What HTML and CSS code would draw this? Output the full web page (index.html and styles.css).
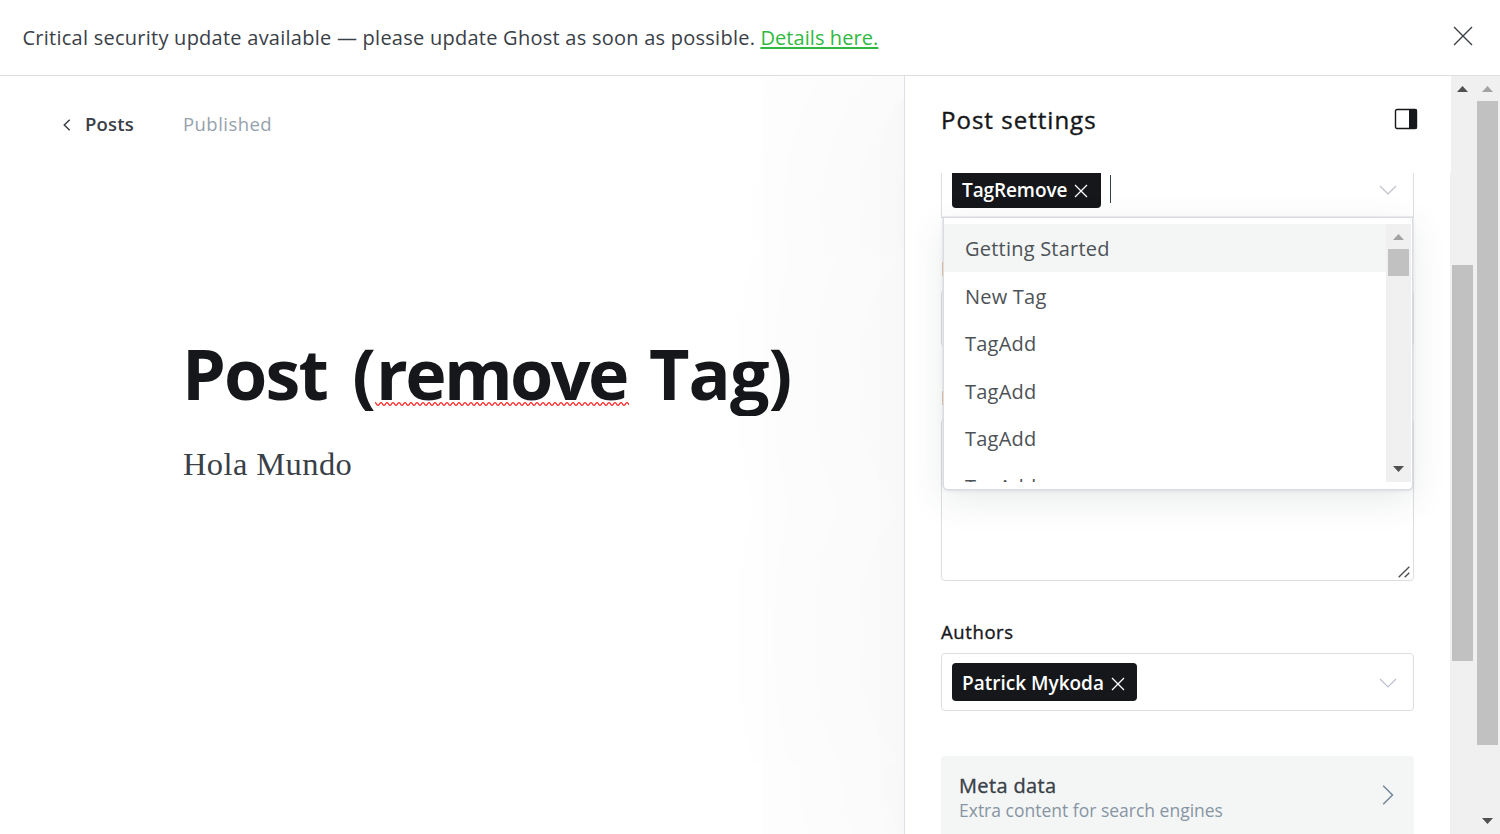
FILE: index.html
```html
<!DOCTYPE html>
<html lang="en">
<head>
<meta charset="utf-8">
<title>Post settings</title>
<link rel="stylesheet" href="styles.css">
</head>
<body>
<div class="app">
  <header class="banner">
    <p class="banner-text"><span class="banner-copy">Critical security update available — please update Ghost as soon as possible.</span> <a class="banner-link" href="#">Details here.</a></p>
    <svg class="banner-close" viewBox="0 0 20 20"><path d="M1 1L19 19M19 1L1 19"/></svg>
  </header>
  <div class="workspace">
    <main class="editor">
      <nav class="crumbs">
        <svg class="back" viewBox="0 0 8 12"><path d="M6.7 .8L1.3 6L6.7 11.2"/></svg>
        <span class="posts">Posts</span>
        <span class="status">Published</span>
      </nav>
      <h1 class="title">Post (<span class="misspelt">remove<svg class="wave" viewBox="0 0 254 4"><defs><pattern id="squiggle" width="6" height="4" patternUnits="userSpaceOnUse"><path class="wave-line" d="M-1.5 2Q0 -.6 1.5 2T4.5 2T7.5 2"/></pattern></defs><rect width="254" height="4" fill="url(#squiggle)"/></svg></span> <span class="title-end">Tag)</span></h1>
      <p class="body-copy">Hola Mundo</p>
    </main>
    <aside class="panel">
      <div class="panel-head">
        <h2 class="panel-title">Post settings</h2>
        <svg class="panel-icon" viewBox="0 0 24 22"><rect x="1.5" y="1.5" width="21" height="19" rx="1.5"/><path d="M15 1h7.5v20H15z"/></svg>
      </div>
      <div class="panel-scroll">
        <div class="select tags">
          <span class="chip chip-tag"><span class="chip-tag-text">TagRemove</span><svg class="chip-x" viewBox="0 0 14 14"><path d="M1 1L13 13M13 1L1 13"/></svg></span>
          <span class="caret"></span>
          <svg class="chevron" viewBox="0 0 18 10"><path d="M1 1L9 9L17 1"/></svg>
          <div class="dropdown">
            <ul class="options">
              <li class="option active">Getting Started</li>
              <li class="option">New Tag</li>
              <li class="option">TagAdd</li>
              <li class="option">TagAdd</li>
              <li class="option">TagAdd</li>
              <li class="option">TagAdd</li>
            </ul>
            <div class="bar list-bar">
              <svg class="arrow faint" viewBox="0 0 11 6"><path d="M0 6L5.5 0L11 6z"/></svg>
              <div class="thumb list-thumb"></div>
              <svg class="arrow low" viewBox="0 0 11 6"><path d="M0 0L5.5 6L11 0z"/></svg>
            </div>
          </div>
        </div>
        <div class="covered-label first"></div>
        <div class="field"></div>
        <div class="covered-label second"></div>
        <div class="textarea"><svg class="grip" viewBox="0 0 12 12"><path d="M.7 11.3L11.3 .7M6.7 11.3L11.3 6.7"/></svg></div>
        <h3 class="label">Authors</h3>
        <div class="select authors">
          <span class="chip"><span class="chip-author-text">Patrick Mykoda</span><svg class="chip-x" viewBox="0 0 14 14"><path d="M1 1L13 13M13 1L1 13"/></svg></span>
          <svg class="chevron" viewBox="0 0 18 10"><path d="M1 1L9 9L17 1"/></svg>
        </div>
        <div class="meta">
          <div class="meta-copy">
            <div class="meta-title">Meta data</div>
            <div class="meta-sub">Extra content for search engines</div>
          </div>
          <svg class="meta-arrow" viewBox="0 0 12 20"><path d="M1.2 .8L10.5 10L1.2 19.2"/></svg>
        </div>
      </div>
    </aside>
    <div class="bar panel-bar">
      <svg class="arrow" viewBox="0 0 11 6"><path d="M0 6L5.5 0L11 6z"/></svg>
      <div class="thumb panel-thumb"></div>
    </div>
    <div class="bar page-bar">
      <svg class="arrow faint" viewBox="0 0 11 6"><path d="M0 6L5.5 0L11 6z"/></svg>
      <div class="thumb page-thumb"></div>
      <svg class="arrow low" viewBox="0 0 11 6"><path d="M0 0L5.5 6L11 0z"/></svg>
    </div>
  </div>
</div>
</body>
</html>
```

FILE: styles.css
```css
* { box-sizing: border-box; }
body, h1, h2, h3, p, ul { margin: 0; padding: 0; }
body {
  font-family: "Open Sans", "Noto Sans", sans-serif;
  color: #15171a;
  background: #fff;
  overflow: hidden;
}
svg { display: block; flex: none; fill: none; }
.app { height: 834px; display: flex; flex-direction: column; }

.banner {
  position: relative;
  z-index: 2;
  flex: none;
  height: 76px;
  padding: 0 27px 0 22.5px;
  display: flex;
  align-items: center;
  justify-content: space-between;
  background: #fff;
  border-bottom: 1px solid #dddedf;
}
.banner-text { font-size: 20px; line-height: 30px; color: #394047; white-space: nowrap; }
.banner-copy { letter-spacing: .25px; }
.banner-link { color: #30b940; letter-spacing: .08px; text-decoration-thickness: 2px; text-underline-offset: 2px; }
.banner-close { width: 20px; height: 20px; margin-top: -3px; stroke: #394047; stroke-width: 1.4; }

.workspace { flex: 1; min-height: 0; display: flex; }
.editor { flex: 1; min-width: 0; }
.crumbs { height: 96px; padding-left: 63px; display: flex; align-items: center; }
.back { width: 8px; height: 12px; margin-top: 1px; stroke: #394047; stroke-width: 1.5; }
.posts { margin: -2px 0 0 14px; width: 98px; font-size: 18.5px; font-weight: 600; letter-spacing: .2px; color: #394047; }
.status { margin-top: -2px; font-size: 18.5px; letter-spacing: .45px; color: #95a1ad; }
.title {
  margin: 156px 0 0 182px;
  height: 88px;
  overflow: hidden;
  font-size: 70px;
  line-height: 90px;
  font-weight: 700;
  white-space: nowrap;
  letter-spacing: -1.9px;
  word-spacing: 9px;
}
.misspelt { position: relative; margin: 0 -3px 0 2px; letter-spacing: -2.6px; }
.title-end { letter-spacing: -1px; }
.wave { position: absolute; left: -1px; bottom: 15px; width: 254px; height: 4px; }
.wave-line { stroke: #ff1a1a; stroke-width: 1.3; }
.body-copy {
  margin: 28px 0 0 183px;
  font-family: "Liberation Serif", serif;
  font-size: 32.5px;
  line-height: 40px;
  letter-spacing: .4px;
  color: #394047;
}

.panel {
  position: relative;
  flex: none;
  width: 546px;
  display: flex;
  flex-direction: column;
  background: #fff;
  border-left: 1px solid #dde1e5;
  box-shadow: 0 8px 20px rgba(0,0,0,.02), 0 25px 70px rgba(0,0,0,.016), 0 20px 340px 60px rgba(0,0,0,.045);
}
.panel-head { flex: none; height: 97px; padding: 0 32px 9px 36px; display: flex; align-items: center; justify-content: space-between; }
.panel-title { font-size: 24px; line-height: 32px; font-weight: 500; letter-spacing: 1.02px; -webkit-text-stroke: .4px #15171a; }
.panel-icon { width: 24px; height: 22px; margin-top: -2px; stroke: #15171a; stroke-width: 1.4; }
.panel-icon path { fill: #15171a; stroke: none; }
.panel-scroll { flex: 1; min-height: 0; overflow: hidden; padding: 0 36px; }

.select {
  position: relative;
  display: flex;
  align-items: center;
  border: 1px solid #dddedf;
  border-radius: 4px;
  padding: 0 16px 0 10px;
}
.tags { height: 45px; border-top: 0; border-bottom-color: #c5c8cd; border-radius: 0; align-items: flex-start; }
.chip {
  height: 38px;
  padding: 0 12px 0 10px;
  display: flex;
  align-items: center;
  gap: 7px;
  border-radius: 4px;
  background: #15171a;
  color: #fff;
  font-size: 19px;
  font-weight: 600;
  white-space: nowrap;
}
.chip-tag { height: 35px; padding-right: 13px; border-radius: 0 0 4px 4px; }
.chip-tag-text { margin-top: -2px; letter-spacing: -.1px; }
.chip-author-text { margin-top: 1px; }
.chip-x { width: 14px; height: 14px; stroke: #fff; stroke-width: 1.3; margin-top: 1px; }
.authors .chip-x { margin-top: 4px; }
.caret { width: 1px; height: 28px; margin: 2px 0 0 9px; background: #394047; }
.chevron { width: 18px; height: 10px; margin-left: auto; stroke: #bcc1cc; stroke-width: 1.2; }
.tags .chevron { margin-top: 12px; }
.authors .chevron { margin-top: 2px; }

.dropdown {
  position: absolute;
  z-index: 3;
  top: 45px;
  left: 2px;
  width: 468px;
  height: 271px;
  padding: 6px 1px 7px 0;
  display: flex;
  background: #fff;
  border-radius: 0 0 4px 4px;
  box-shadow: 0 0 0 1.5px #dadce2, 0 1px 4px rgba(80,85,105,.16), 0 10px 36px rgba(60,70,70,.12);
}
.options { flex: 1; height: 258px; overflow: hidden; list-style: none; }
.option { height: 47.5px; padding-left: 21px; font-size: 20px; line-height: 50px; letter-spacing: .22px; color: #4d5257; white-space: nowrap; }
.active { height: 48px; margin-bottom: -.5px; background: #f4f5f5; }

.bar { flex: none; width: 25px; display: flex; flex-direction: column; align-items: center; background: #f0f0f0; }
.arrow { width: 11px; height: 6px; margin-top: 10px; fill: #505050; }
.faint { fill: #a3a3a3; }
.low { margin: auto 0 10px; }
.thumb { width: 21px; background: #c1c1c1; }
.list-bar { height: 258px; }
.list-thumb { height: 27px; margin-top: 9px; }
.panel-bar { position: relative; background: linear-gradient(#fff, #fff) 0 0 / 1px 97px no-repeat #f0f0f0; }
.panel-thumb { height: 396px; margin-top: 173px; }
.page-bar { position: relative; }
.page-thumb { height: 644px; margin-top: 9px; }

.covered-label { height: 14px; margin-left: 1px; border-left: 1px solid #e9a760; }
.first { margin-top: 44px; }
.field { height: 57px; margin-top: 14px; border: 1px solid #dddedf; border-radius: 4px; }
.second { margin-top: 44px; }
.textarea { position: relative; height: 162px; margin-top: 14px; border: 1px solid #dddedf; border-radius: 4px; }
.grip { position: absolute; right: 3px; bottom: 2px; width: 12px; height: 12px; stroke: #505050; stroke-width: 1.4; }
.label { margin-top: 37px; height: 35px; font-size: 18.5px; line-height: 28px; font-weight: 500; letter-spacing: .6px; -webkit-text-stroke: .35px #15171a; }
.authors { height: 58px; }
.meta { height: 92px; margin-top: 45px; padding: 0 20px 0 18px; display: flex; justify-content: space-between; background: #f4f6f6; border-radius: 4px; }
.meta-copy { padding-top: 16px; white-space: nowrap; }
.meta-title { font-size: 20px; line-height: 27px; font-weight: 500; letter-spacing: .35px; -webkit-text-stroke: .35px #394047; color: #394047; }
.meta-sub { font-size: 17.5px; line-height: 23px; color: #8794a3; }
.meta-arrow { width: 12px; height: 20px; margin-top: 28.5px; stroke: #738598; stroke-width: 1.5; }
```
